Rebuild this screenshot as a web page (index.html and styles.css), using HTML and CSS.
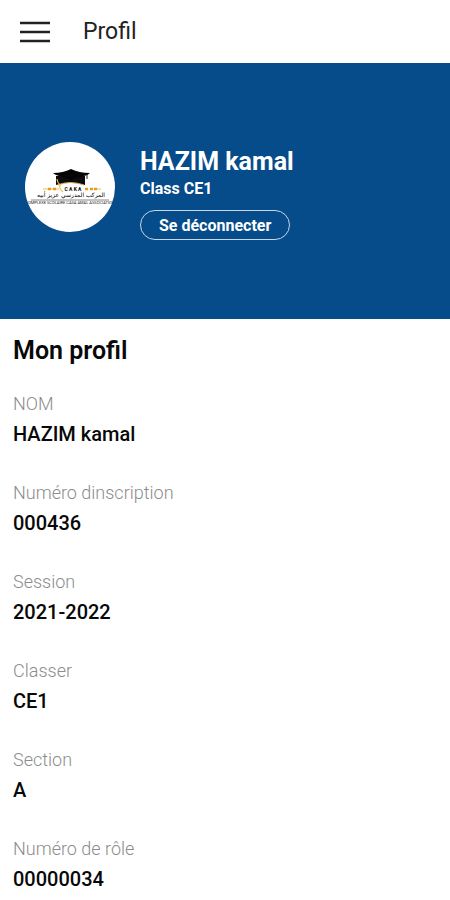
FILE: index.html
```html
<!DOCTYPE html>
<html lang="fr">

<head>
    <meta charset="UTF-8">
    <meta name="viewport" content="width=device-width, initial-scale=1.0">
    <title>Profil</title>
    <link rel="stylesheet" href="styles.css">
</head>

<body>
    <header class="topbar">
        <button type="button" class="menu-button" aria-label="Menu">
            <svg width="30" height="22" viewBox="0 0 30 22">
                <path d="M0 2h30M0 11h30M0 20h30" stroke="#222" stroke-width="2.6" />
            </svg>
        </button>
        <h1 class="topbar-title">Profil</h1>
    </header>

    <section class="banner">
        <div class="avatar">
            <svg width="90" height="90" viewBox="0 0 90 90">
                <!-- graduation cap -->
                <path d="M31 34v9q14-5 29 0v-9z" fill="#0c0c0c" />
                <path d="M28 31Q38 31 46 27Q54 31 65 31Q62 34 59 34Q52 35 46 38Q40 35 34 34Q30 33 28 31z" fill="#050505" />
                <path d="M33 43q12-5 26 0" fill="none" stroke="#d0a85a" stroke-width="1" />
                <path d="M62 32v5" stroke="#222" stroke-width="1" />
                <!-- gold ribbon -->
                <path d="M32 37q0 3 3 6q-1 4 3 7M18 47h16M70 47h6" fill="none" stroke="#f0bd45" stroke-width="1.2" />
                <path d="M23 47h3m2 0h3m29 0h3m2 0h3m1 0h3" stroke="#e99b16" stroke-width="2.4" />
                <text class="logo-name" x="48" y="49" text-anchor="middle">C A K A</text>
                <text class="logo-arabic" x="46" y="55" text-anchor="middle">المركب المدرسي عزيز أبيه</text>
                <path d="M6 58h78" stroke="#888" stroke-width="1" />
                <text class="logo-caption" x="45" y="62" text-anchor="middle">COMPLEXE SCOLAIRE CASA AMAL ASSOCIATION</text>
            </svg>
        </div>
        <div class="banner-info">
            <h2 class="banner-name">HAZIM kamal</h2>
            <p class="banner-class">Class CE1</p>
            <button type="button" class="logout-button">Se déconnecter</button>
        </div>
    </section>

    <main class="profile">
        <h2 class="profile-title">Mon profil</h2>
        <dl class="profile-list">
            <div class="profile-item">
                <dt>NOM</dt>
                <dd>HAZIM kamal</dd>
            </div>
            <div class="profile-item">
                <dt>Numéro dinscription</dt>
                <dd>000436</dd>
            </div>
            <div class="profile-item">
                <dt>Session</dt>
                <dd>2021-2022</dd>
            </div>
            <div class="profile-item">
                <dt>Classer</dt>
                <dd>CE1</dd>
            </div>
            <div class="profile-item">
                <dt>Section</dt>
                <dd>A</dd>
            </div>
            <div class="profile-item">
                <dt>Numéro de rôle</dt>
                <dd>00000034</dd>
            </div>
        </dl>
    </main>
</body>

</html>
```
FILE: styles.css
```css
* {
    box-sizing: border-box;
}

body {
    font-family: Roboto, "Liberation Sans", sans-serif;
    margin: 0;
    background-color: #fff;
    color: #080808;
}

h1,
h2,
p,
dl,
dd {
    margin: 0;
}

.topbar {
    display: flex;
    align-items: center;
    gap: 33px;
    height: 63px;
    padding: 0 20px;
}

.menu-button {
    padding: 0;
    border: none;
    background: none;
    cursor: pointer;
}

.menu-button svg {
    display: block;
}

.topbar-title {
    font-size: 23px;
    line-height: 28px;
    font-weight: 400;
    color: #222;
}

.banner {
    display: flex;
    align-items: flex-start;
    gap: 25px;
    padding: 79px 25px;
    background-color: #064b8a;
    color: #fff;
}

.avatar {
    flex: none;
    width: 90px;
    height: 90px;
    border-radius: 50%;
    background-color: #fff;
    overflow: hidden;
}

.avatar svg {
    display: block;
}

.logo-name {
    font-size: 5px;
    font-weight: 700;
}

.logo-arabic {
    font-family: "DejaVu Sans", sans-serif;
    font-size: 6px;
}

.logo-caption {
    font-size: 4px;
    fill: #222;
}

.banner-info {
    padding-top: 5px;
}

.banner-name {
    font-size: 25px;
    line-height: 30px;
    font-weight: 700;
}

.banner-class {
    font-size: 16px;
    line-height: 24px;
    font-weight: 700;
}

.logout-button {
    display: block;
    height: 30px;
    margin-top: 9px;
    padding: 0 18px;
    border: 1px solid #c5d7e8;
    border-radius: 15px;
    background: none;
    color: #fff;
    font-family: inherit;
    font-size: 16px;
    font-weight: 700;
    cursor: pointer;
}

.profile {
    padding: 17px 13px;
}

.profile-title {
    font-size: 25px;
    line-height: 30px;
    font-weight: 600;
}

.profile-list {
    display: flex;
    flex-direction: column;
    gap: 29px;
    margin-top: 23px;
}

.profile-item dt {
    font-size: 18px;
    line-height: 30px;
    font-weight: 300;
    color: #8c8c8c;
}

.profile-item dd {
    font-size: 20px;
    line-height: 30px;
    font-weight: 500;
}
```
